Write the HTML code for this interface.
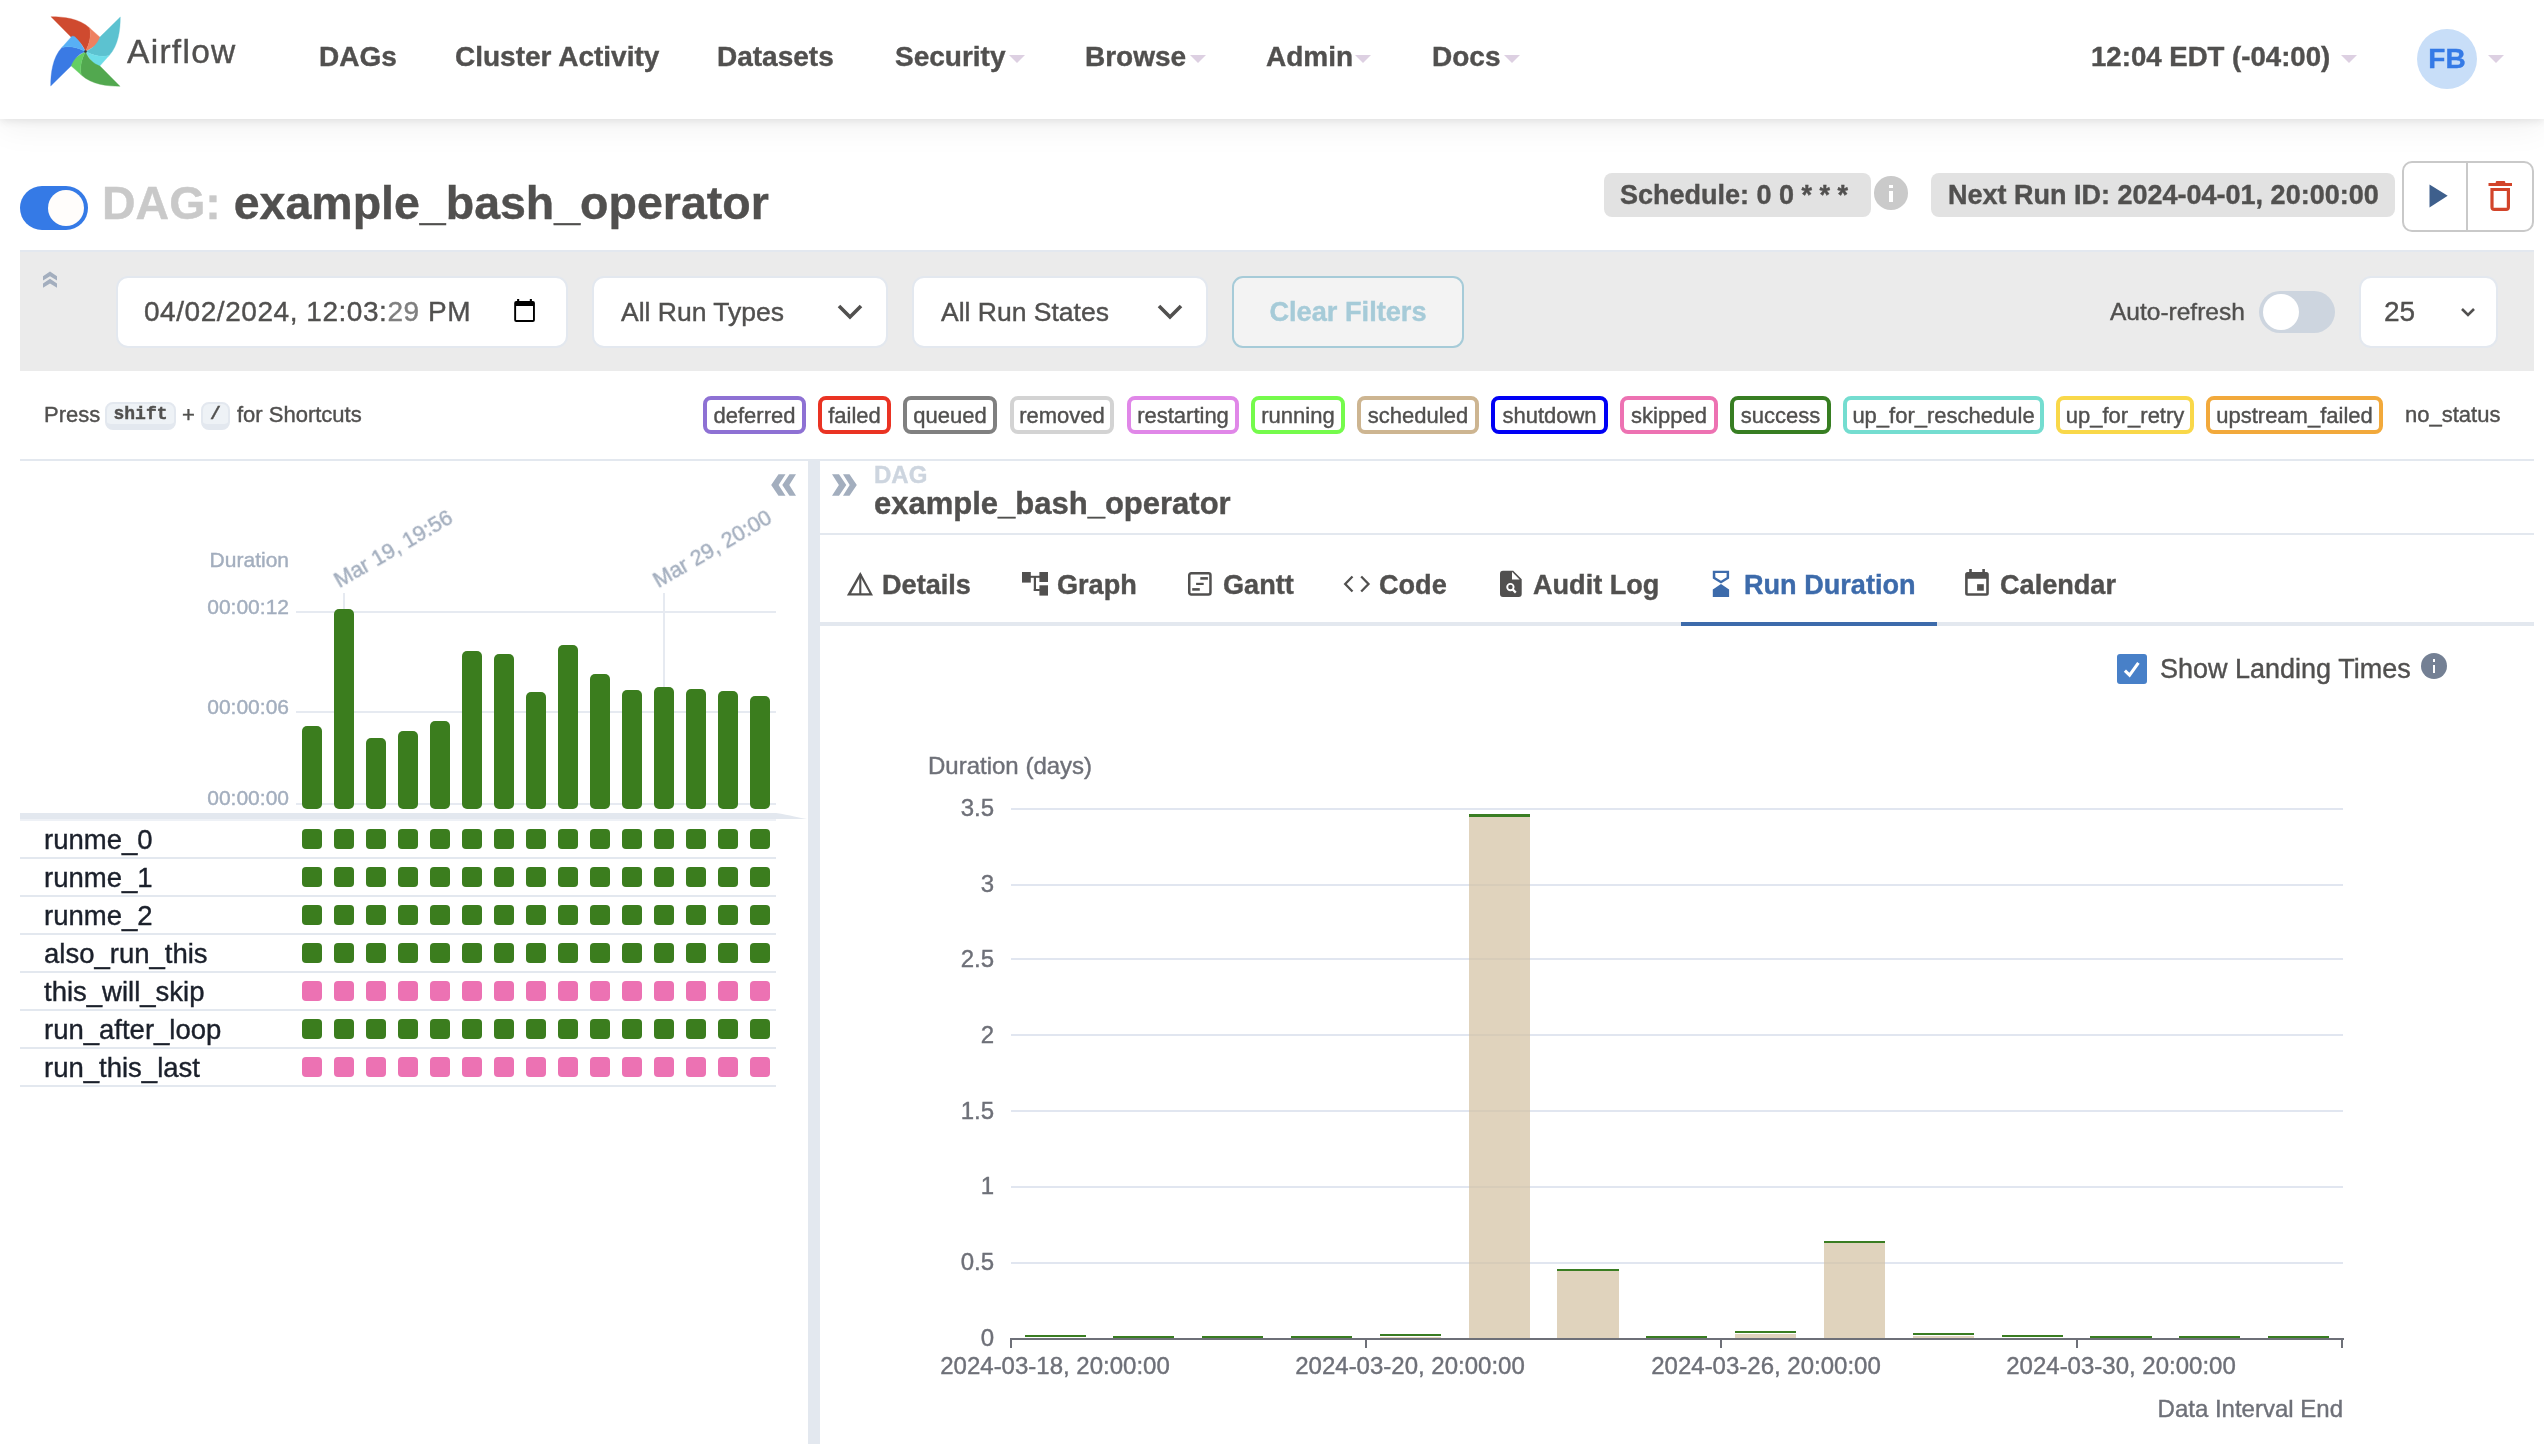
<!DOCTYPE html>
<html><head><meta charset="utf-8">
<style>
html,body{margin:0;padding:0;background:#fff;width:2544px;height:1444px;overflow:hidden;position:relative;font-family:"Liberation Sans",sans-serif;color:#51504f}
.a{position:absolute}
.t{position:absolute;white-space:nowrap;line-height:1;will-change:transform;-webkit-text-stroke:0.4px currentColor}
.b{font-weight:bold}
.caret{position:absolute;width:0;height:0;border-left:8px solid transparent;border-right:8px solid transparent;border-top:8px solid #ddd0e2}
.badge{will-change:transform;-webkit-text-stroke:0.4px currentColor;position:absolute;top:396px;height:38px;box-sizing:border-box;border:4px solid;border-radius:8px;font-size:22px;line-height:31.5px;text-align:center;color:#51504f}
.sq{position:absolute;width:20px;height:20px;border-radius:4px}
.gl{position:absolute;height:2px;background:#e3e8ef}
</style></head><body>

<!-- NAVBAR -->
<div class="a" style="left:0;top:0;width:2544px;height:119px;background:#fff;box-shadow:0 2px 8px rgba(0,0,0,0.09),0 8px 32px rgba(0,0,0,0.06);z-index:2"></div>
<div class="a" style="left:0;top:0;width:2544px;height:119px;z-index:3">
  <svg class="a" style="left:0;top:0" width="140" height="119" viewBox="0 0 140 119">
    <g transform="translate(85.5 51.5)">
      <g id="blade">
        <path d="M-34.5,-34.8 C-22,-34.8 -6,-33 4.1,-23.6 C6,-16 4,-8 0,0 C-3,-8 -8,-12 -14.7,-14.7 Z" fill="#cf4a2f" stroke="#cf4a2f" stroke-width="0.35"/>
        <path d="M4.1,-23.6 L15.3,-13.6 C15.5,-12 15,-11 14.7,-10.6 C11,-6 5,-3 0,0 C4,-8 6,-16 4.1,-23.6 Z" fill="#ee8060" stroke="#ee8060" stroke-width="0.35"/>
      </g>
      <g transform="rotate(90)">
        <path d="M-34.5,-34.8 C-22,-34.8 -6,-33 4.1,-23.6 C6,-16 4,-8 0,0 C-3,-8 -8,-12 -14.7,-14.7 Z" fill="#5cc2d0" stroke="#5cc2d0" stroke-width="0.35"/>
        <path d="M4.1,-23.6 L15.3,-13.6 C15.5,-12 15,-11 14.7,-10.6 C11,-6 5,-3 0,0 C4,-8 6,-16 4.1,-23.6 Z" fill="#6ddde8" stroke="#6ddde8" stroke-width="0.35"/>
      </g>
      <g transform="rotate(180)">
        <path d="M-34.5,-34.8 C-22,-34.8 -6,-33 4.1,-23.6 C6,-16 4,-8 0,0 C-3,-8 -8,-12 -14.7,-14.7 Z" fill="#52a84f" stroke="#52a84f" stroke-width="0.35"/>
        <path d="M4.1,-23.6 L15.3,-13.6 C15.5,-12 15,-11 14.7,-10.6 C11,-6 5,-3 0,0 C4,-8 6,-16 4.1,-23.6 Z" fill="#65cf63" stroke="#65cf63" stroke-width="0.35"/>
      </g>
      <g transform="rotate(270)">
        <path d="M-34.5,-34.8 C-22,-34.8 -6,-33 4.1,-23.6 C6,-16 4,-8 0,0 C-3,-8 -8,-12 -14.7,-14.7 Z" fill="#3a7ae4" stroke="#3a7ae4" stroke-width="0.35"/>
        <path d="M4.1,-23.6 L15.3,-13.6 C15.5,-12 15,-11 14.7,-10.6 C11,-6 5,-3 0,0 C4,-8 6,-16 4.1,-23.6 Z" fill="#58b0f5" stroke="#58b0f5" stroke-width="0.35"/>
      </g>
      <circle r="1.3" fill="#333"/>
    </g>
  </svg>
  <div class="t" style="left:127px;top:35.4px;font-size:33.5px;letter-spacing:1.3px">Airflow</div>
  <div class="t b" style="left:319px;top:43px;font-size:28px">DAGs</div>
  <div class="t b" style="left:455px;top:43px;font-size:28px">Cluster Activity</div>
  <div class="t b" style="left:717px;top:43px;font-size:28px">Datasets</div>
  <div class="t b" style="left:895px;top:43px;font-size:28px">Security</div>
  <div class="caret" style="left:1009px;top:55px"></div>
  <div class="t b" style="left:1085px;top:43px;font-size:28px">Browse</div>
  <div class="caret" style="left:1190px;top:55px"></div>
  <div class="t b" style="left:1266px;top:43px;font-size:28px">Admin</div>
  <div class="caret" style="left:1355px;top:55px"></div>
  <div class="t b" style="left:1432px;top:43px;font-size:28px">Docs</div>
  <div class="caret" style="left:1504px;top:55px"></div>
  <div class="t b" style="left:2090.5px;top:43px;font-size:27.6px">12:04 EDT (-04:00)</div>
  <div class="caret" style="left:2341px;top:55px"></div>
  <div class="a" style="left:2417px;top:29px;width:60px;height:60px;border-radius:50%;background:#c8def8"></div>
  <div class="t b" style="left:2417px;top:45.2px;width:60px;text-align:center;font-size:28px;color:#357ae6">FB</div>
  <div class="caret" style="left:2488px;top:55px"></div>
</div>

<!-- TITLE ROW -->
<div class="a" style="left:20px;top:186px;width:68px;height:44px;border-radius:22px;background:#357ae6"></div>
<div class="a" style="left:48px;top:190px;width:36px;height:36px;border-radius:50%;background:#fffdfb"></div>
<div class="t b" style="left:101.5px;top:179.8px;font-size:46.5px;color:#c9c9c9">DAG: <span style="color:#51504f">example_bash_operator</span></div>

<div class="a" style="left:1604px;top:173px;width:267px;height:44px;border-radius:8px;background:#e2e2e2"></div>
<div class="t b" style="left:1620px;top:182px;font-size:27px">Schedule: 0 0 * * *</div>
<div class="a" style="left:1874px;top:176.2px;width:33.6px;height:33.6px;border-radius:50%;background:#cacaca"></div>
<div class="a" style="left:1889px;top:184.8px;width:4px;height:3.2px;background:#fff"></div>
<div class="a" style="left:1889px;top:190.9px;width:4px;height:10.7px;background:#fff"></div>
<div class="a" style="left:1931px;top:173px;width:464px;height:44px;border-radius:8px;background:#e2e2e2"></div>
<div class="t b" style="left:1948px;top:182px;font-size:27px">Next Run ID: 2024-04-01, 20:00:00</div>
<div class="a" style="left:2402px;top:161px;width:132px;height:71px;box-sizing:border-box;border:2px solid #c9c9c9;border-radius:10px"></div>
<div class="a" style="left:2466px;top:162px;width:2px;height:69px;background:#c9c9c9"></div>
<svg class="a" style="left:2420px;top:176px" width="40" height="40" viewBox="0 0 40 40"><path d="M9.5,8.5 L27.7,19.8 L9.5,31.5 Z" fill="#3e5f8c"/></svg>
<svg class="a" style="left:2480px;top:176px" width="40" height="40" viewBox="0 0 40 40">
  <path d="M8.5,7.1 H32 V10 H8.5 Z M17,4.9 H24 a1.3,1.3 0 0 1 1.3,1.3 V7.3 H15.7 V6.2 a1.3,1.3 0 0 1 1.3,-1.3 Z" fill="#d2442a"/>
  <path d="M10.4,11.9 H30 V31 a3.9,3.9 0 0 1 -3.9,3.9 H14.3 a3.9,3.9 0 0 1 -3.9,-3.9 Z M13.6,14.9 V31.7 H26.8 V14.9 Z" fill="#d2442a" fill-rule="evenodd"/>
</svg>

<!-- FILTER BAR -->
<div class="a" style="left:20px;top:250px;width:2514px;height:121px;background:#ebebeb;border-top:2px solid #e3e8ef;box-sizing:border-box"></div>
<svg class="a" style="left:40px;top:268px" width="20" height="24" viewBox="0 0 20 24"><path d="M3,8.3 L10,3.6 L17,8.3 L17,12.5 L10,8.3 L3,12.5 Z M3,15.5 L10,10.8 L17,15.5 L17,19.7 L10,15.5 L3,19.7 Z" fill="#a3aebe"/></svg>

<div class="a" style="left:116px;top:276px;width:452px;height:72px;box-sizing:border-box;border:2px solid #e3e8ef;border-radius:12px;background:#fff"></div>
<div class="t" style="left:144px;top:297.6px;font-size:28px;letter-spacing:0.55px">04/02/2024, 12:03:<span style="color:#7f7f7f">29</span> PM</div>
<svg class="a" style="left:512px;top:298px" width="26" height="26" viewBox="0 0 26 26"><path d="M4.2,2.9 H20.9 a2,2 0 0 1 2,2 V22 a2,2 0 0 1 -2,2 H4.2 a2,2 0 0 1 -2,-2 V4.9 a2,2 0 0 1 2,-2 Z M4.1,7.9 V22.1 H21 V7.9 Z" fill="#000" fill-rule="evenodd"/><rect x="5.1" y="1" width="2.1" height="3" fill="#000"/><rect x="17.8" y="1" width="2.1" height="3" fill="#000"/></svg>

<div class="a" style="left:592px;top:276px;width:296px;height:72px;box-sizing:border-box;border:2px solid #e3e8ef;border-radius:12px;background:#fff"></div>
<div class="t" style="left:621px;top:299.2px;font-size:26.5px">All Run Types</div>
<svg class="a" style="left:836px;top:299.3px" width="28" height="24" viewBox="0 0 28 24"><path d="M3,7 L14,18 L25,7" fill="none" stroke="#51504f" stroke-width="3.6"/></svg>

<div class="a" style="left:912px;top:276px;width:296px;height:72px;box-sizing:border-box;border:2px solid #e3e8ef;border-radius:12px;background:#fff"></div>
<div class="t" style="left:941px;top:299.2px;font-size:26.5px">All Run States</div>
<svg class="a" style="left:1156px;top:299.3px" width="28" height="24" viewBox="0 0 28 24"><path d="M3,7 L14,18 L25,7" fill="none" stroke="#51504f" stroke-width="3.6"/></svg>

<div class="a" style="left:1232px;top:276px;width:232px;height:72px;box-sizing:border-box;border:2px solid #a6cbd8;border-radius:11px;background:#f3f3f3"></div>
<div class="t b" style="left:1232px;top:297.6px;width:232px;text-align:center;font-size:27.2px;color:#a6cbd8">Clear Filters</div>

<div class="t" style="left:2109.5px;top:299.8px;font-size:24.5px">Auto-refresh</div>
<div class="a" style="left:2259px;top:291px;width:76px;height:42px;border-radius:21px;background:#cdd5df"></div>
<div class="a" style="left:2262.5px;top:293.8px;width:36.2px;height:36.2px;border-radius:50%;background:#fff"></div>
<div class="a" style="left:2359px;top:276px;width:139px;height:72px;box-sizing:border-box;border:2px solid #e3e8ef;border-radius:12px;background:#fff"></div>
<div class="t" style="left:2384px;top:297.6px;font-size:28px">25</div>
<svg class="a" style="left:2458px;top:302px" width="20" height="20" viewBox="0 0 20 20"><path d="M4,7 L10,13 L16,7" fill="none" stroke="#51504f" stroke-width="2.6"/></svg>

<!-- LEGEND ROW -->
<div class="t" style="left:44px;top:404px;font-size:22px">Press</div>
<div class="a" style="left:105px;top:402px;width:71px;height:28px;box-sizing:border-box;background:#eef2f6;border:2px solid #e3e8ef;border-bottom:6px solid #e3e8ef;border-radius:8px"></div>
<div class="t b" style="left:105px;top:405px;width:71px;text-align:center;font-family:'Liberation Mono',monospace;font-size:18px">shift</div>
<div class="t" style="left:182px;top:404px;font-size:22px">+</div>
<div class="a" style="left:201px;top:402px;width:29px;height:28px;box-sizing:border-box;background:#eef2f6;border:2px solid #e3e8ef;border-bottom:6px solid #e3e8ef;border-radius:8px"></div>
<div class="t b" style="left:201px;top:405px;width:29px;text-align:center;font-family:'Liberation Mono',monospace;font-size:18px">/</div>
<div class="t" style="left:237px;top:404px;font-size:22px">for Shortcuts</div>

<div class="badge" style="left:703px;width:103px;border-color:#8e71d4">deferred</div>
<div class="badge" style="left:818px;width:73px;border-color:#ea3323">failed</div>
<div class="badge" style="left:903px;width:94px;border-color:#808080">queued</div>
<div class="badge" style="left:1010px;width:104px;border-color:#d3d3d3">removed</div>
<div class="badge" style="left:1127px;width:112px;border-color:#e087e8">restarting</div>
<div class="badge" style="left:1251px;width:94px;border-color:#75fb4c">running</div>
<div class="badge" style="left:1357px;width:122px;border-color:#cdb591">scheduled</div>
<div class="badge" style="left:1491px;width:117px;border-color:#0000f5">shutdown</div>
<div class="badge" style="left:1620px;width:98px;border-color:#ed72b2">skipped</div>
<div class="badge" style="left:1730px;width:101px;border-color:#377e22">success</div>
<div class="badge" style="left:1843px;width:201px;border-color:#74ddd0">up_for_reschedule</div>
<div class="badge" style="left:2056px;width:138px;border-color:#f9d849">up_for_retry</div>
<div class="badge" style="left:2206px;width:177px;border-color:#f2a93b">upstream_failed</div>
<div class="t" style="left:2405px;top:404px;font-size:22px">no_status</div>

<!-- PANELS -->
<div class="a" style="left:20px;top:459px;width:2514px;height:2px;background:#e3e8ef"></div>
<div class="a" style="left:808px;top:461px;width:12px;height:983px;background:#e3e8ef"></div>

<!-- LEFT PANEL -->
<svg class="a" style="left:766px;top:470px" width="36" height="30" viewBox="0 0 36 30"><path d="M12.5,4.2 H19.5 L12.6,15 L19.5,25.7 H12.5 L5.2,15 Z M23.5,4.2 H30 L23.3,15 L30,25.7 H23.5 L16.3,15 Z" fill="#a3aebe"/></svg>
<div class="t" style="left:120px;top:548.5px;width:169px;text-align:right;font-size:21px;color:#a3aebe">Duration</div>
<div class="t" style="left:120px;top:595.7px;width:169px;text-align:right;font-size:21px;color:#a3aebe">00:00:12</div>
<div class="t" style="left:120px;top:695.8px;width:169px;text-align:right;font-size:21px;color:#a3aebe">00:00:06</div>
<div class="t" style="left:120px;top:787.2px;width:169px;text-align:right;font-size:21px;color:#a3aebe">00:00:00</div>
<div class="a" style="left:296px;top:611px;width:480px;height:2px;background:#e6eaf1"></div>
<div class="a" style="left:296px;top:711px;width:480px;height:2px;background:#e6eaf1"></div>
<div class="a" style="left:296px;top:803px;width:480px;height:2px;background:#e6eaf1"></div>
<div class="a" style="left:343px;top:593px;width:2px;height:20px;background:#e6eaf1"></div>
<div class="a" style="left:663px;top:593px;width:2px;height:100px;background:#e6eaf1"></div>
<div class="t" style="left:339.5px;top:571.10px;font-size:21.5px;color:#a3aebe;transform-origin:0 18.20px;transform:rotate(-30deg)">Mar 19, 19:56</div>
<div class="t" style="left:659.0px;top:571.10px;font-size:21.5px;color:#a3aebe;transform-origin:0 18.20px;transform:rotate(-30deg)">Mar 29, 20:00</div>
<div class="a" style="left:302px;top:726.0px;width:20px;height:83.0px;border-radius:5px;background:#3b7d1e"></div>
<div class="a" style="left:334px;top:608.9px;width:20px;height:200.1px;border-radius:5px;background:#3b7d1e"></div>
<div class="a" style="left:366px;top:737.9px;width:20px;height:71.1px;border-radius:5px;background:#3b7d1e"></div>
<div class="a" style="left:398px;top:731.1px;width:20px;height:77.9px;border-radius:5px;background:#3b7d1e"></div>
<div class="a" style="left:430px;top:721.1px;width:20px;height:87.9px;border-radius:5px;background:#3b7d1e"></div>
<div class="a" style="left:462px;top:650.8px;width:20px;height:158.2px;border-radius:5px;background:#3b7d1e"></div>
<div class="a" style="left:494px;top:653.7px;width:20px;height:155.3px;border-radius:5px;background:#3b7d1e"></div>
<div class="a" style="left:526px;top:691.8px;width:20px;height:117.2px;border-radius:5px;background:#3b7d1e"></div>
<div class="a" style="left:558px;top:645.0px;width:20px;height:164.0px;border-radius:5px;background:#3b7d1e"></div>
<div class="a" style="left:590px;top:673.7px;width:20px;height:135.3px;border-radius:5px;background:#3b7d1e"></div>
<div class="a" style="left:622px;top:689.9px;width:20px;height:119.1px;border-radius:5px;background:#3b7d1e"></div>
<div class="a" style="left:654px;top:686.6px;width:20px;height:122.4px;border-radius:5px;background:#3b7d1e"></div>
<div class="a" style="left:686px;top:688.9px;width:20px;height:120.1px;border-radius:5px;background:#3b7d1e"></div>
<div class="a" style="left:718px;top:690.8px;width:20px;height:118.2px;border-radius:5px;background:#3b7d1e"></div>
<div class="a" style="left:750px;top:695.7px;width:20px;height:113.3px;border-radius:5px;background:#3b7d1e"></div>
<svg class="a" style="left:20px;top:812px" width="790" height="12" viewBox="0 0 790 12"><path d="M0,1 H756 C770,3 780,6 787,7 H0 Z" fill="#e3e8ef"/><rect x="0" y="7" width="756" height="2" fill="#eef1f6"/></svg>
<div class="t" style="left:44px;top:825.7px;font-size:27.5px;color:#1b202b">runme_0</div>
<div class="sq" style="left:302px;top:829.3px;background:#3b7d1e"></div>
<div class="sq" style="left:334px;top:829.3px;background:#3b7d1e"></div>
<div class="sq" style="left:366px;top:829.3px;background:#3b7d1e"></div>
<div class="sq" style="left:398px;top:829.3px;background:#3b7d1e"></div>
<div class="sq" style="left:430px;top:829.3px;background:#3b7d1e"></div>
<div class="sq" style="left:462px;top:829.3px;background:#3b7d1e"></div>
<div class="sq" style="left:494px;top:829.3px;background:#3b7d1e"></div>
<div class="sq" style="left:526px;top:829.3px;background:#3b7d1e"></div>
<div class="sq" style="left:558px;top:829.3px;background:#3b7d1e"></div>
<div class="sq" style="left:590px;top:829.3px;background:#3b7d1e"></div>
<div class="sq" style="left:622px;top:829.3px;background:#3b7d1e"></div>
<div class="sq" style="left:654px;top:829.3px;background:#3b7d1e"></div>
<div class="sq" style="left:686px;top:829.3px;background:#3b7d1e"></div>
<div class="sq" style="left:718px;top:829.3px;background:#3b7d1e"></div>
<div class="sq" style="left:750px;top:829.3px;background:#3b7d1e"></div>
<div class="gl" style="left:20px;top:857px;width:756px"></div>
<div class="t" style="left:44px;top:863.7px;font-size:27.5px;color:#1b202b">runme_1</div>
<div class="sq" style="left:302px;top:867.3px;background:#3b7d1e"></div>
<div class="sq" style="left:334px;top:867.3px;background:#3b7d1e"></div>
<div class="sq" style="left:366px;top:867.3px;background:#3b7d1e"></div>
<div class="sq" style="left:398px;top:867.3px;background:#3b7d1e"></div>
<div class="sq" style="left:430px;top:867.3px;background:#3b7d1e"></div>
<div class="sq" style="left:462px;top:867.3px;background:#3b7d1e"></div>
<div class="sq" style="left:494px;top:867.3px;background:#3b7d1e"></div>
<div class="sq" style="left:526px;top:867.3px;background:#3b7d1e"></div>
<div class="sq" style="left:558px;top:867.3px;background:#3b7d1e"></div>
<div class="sq" style="left:590px;top:867.3px;background:#3b7d1e"></div>
<div class="sq" style="left:622px;top:867.3px;background:#3b7d1e"></div>
<div class="sq" style="left:654px;top:867.3px;background:#3b7d1e"></div>
<div class="sq" style="left:686px;top:867.3px;background:#3b7d1e"></div>
<div class="sq" style="left:718px;top:867.3px;background:#3b7d1e"></div>
<div class="sq" style="left:750px;top:867.3px;background:#3b7d1e"></div>
<div class="gl" style="left:20px;top:895px;width:756px"></div>
<div class="t" style="left:44px;top:901.7px;font-size:27.5px;color:#1b202b">runme_2</div>
<div class="sq" style="left:302px;top:905.3px;background:#3b7d1e"></div>
<div class="sq" style="left:334px;top:905.3px;background:#3b7d1e"></div>
<div class="sq" style="left:366px;top:905.3px;background:#3b7d1e"></div>
<div class="sq" style="left:398px;top:905.3px;background:#3b7d1e"></div>
<div class="sq" style="left:430px;top:905.3px;background:#3b7d1e"></div>
<div class="sq" style="left:462px;top:905.3px;background:#3b7d1e"></div>
<div class="sq" style="left:494px;top:905.3px;background:#3b7d1e"></div>
<div class="sq" style="left:526px;top:905.3px;background:#3b7d1e"></div>
<div class="sq" style="left:558px;top:905.3px;background:#3b7d1e"></div>
<div class="sq" style="left:590px;top:905.3px;background:#3b7d1e"></div>
<div class="sq" style="left:622px;top:905.3px;background:#3b7d1e"></div>
<div class="sq" style="left:654px;top:905.3px;background:#3b7d1e"></div>
<div class="sq" style="left:686px;top:905.3px;background:#3b7d1e"></div>
<div class="sq" style="left:718px;top:905.3px;background:#3b7d1e"></div>
<div class="sq" style="left:750px;top:905.3px;background:#3b7d1e"></div>
<div class="gl" style="left:20px;top:933px;width:756px"></div>
<div class="t" style="left:44px;top:939.7px;font-size:27.5px;color:#1b202b">also_run_this</div>
<div class="sq" style="left:302px;top:943.3px;background:#3b7d1e"></div>
<div class="sq" style="left:334px;top:943.3px;background:#3b7d1e"></div>
<div class="sq" style="left:366px;top:943.3px;background:#3b7d1e"></div>
<div class="sq" style="left:398px;top:943.3px;background:#3b7d1e"></div>
<div class="sq" style="left:430px;top:943.3px;background:#3b7d1e"></div>
<div class="sq" style="left:462px;top:943.3px;background:#3b7d1e"></div>
<div class="sq" style="left:494px;top:943.3px;background:#3b7d1e"></div>
<div class="sq" style="left:526px;top:943.3px;background:#3b7d1e"></div>
<div class="sq" style="left:558px;top:943.3px;background:#3b7d1e"></div>
<div class="sq" style="left:590px;top:943.3px;background:#3b7d1e"></div>
<div class="sq" style="left:622px;top:943.3px;background:#3b7d1e"></div>
<div class="sq" style="left:654px;top:943.3px;background:#3b7d1e"></div>
<div class="sq" style="left:686px;top:943.3px;background:#3b7d1e"></div>
<div class="sq" style="left:718px;top:943.3px;background:#3b7d1e"></div>
<div class="sq" style="left:750px;top:943.3px;background:#3b7d1e"></div>
<div class="gl" style="left:20px;top:971px;width:756px"></div>
<div class="t" style="left:44px;top:977.7px;font-size:27.5px;color:#1b202b">this_will_skip</div>
<div class="sq" style="left:302px;top:981.3px;background:#ec72b3"></div>
<div class="sq" style="left:334px;top:981.3px;background:#ec72b3"></div>
<div class="sq" style="left:366px;top:981.3px;background:#ec72b3"></div>
<div class="sq" style="left:398px;top:981.3px;background:#ec72b3"></div>
<div class="sq" style="left:430px;top:981.3px;background:#ec72b3"></div>
<div class="sq" style="left:462px;top:981.3px;background:#ec72b3"></div>
<div class="sq" style="left:494px;top:981.3px;background:#ec72b3"></div>
<div class="sq" style="left:526px;top:981.3px;background:#ec72b3"></div>
<div class="sq" style="left:558px;top:981.3px;background:#ec72b3"></div>
<div class="sq" style="left:590px;top:981.3px;background:#ec72b3"></div>
<div class="sq" style="left:622px;top:981.3px;background:#ec72b3"></div>
<div class="sq" style="left:654px;top:981.3px;background:#ec72b3"></div>
<div class="sq" style="left:686px;top:981.3px;background:#ec72b3"></div>
<div class="sq" style="left:718px;top:981.3px;background:#ec72b3"></div>
<div class="sq" style="left:750px;top:981.3px;background:#ec72b3"></div>
<div class="gl" style="left:20px;top:1009px;width:756px"></div>
<div class="t" style="left:44px;top:1015.7px;font-size:27.5px;color:#1b202b">run_after_loop</div>
<div class="sq" style="left:302px;top:1019.3px;background:#3b7d1e"></div>
<div class="sq" style="left:334px;top:1019.3px;background:#3b7d1e"></div>
<div class="sq" style="left:366px;top:1019.3px;background:#3b7d1e"></div>
<div class="sq" style="left:398px;top:1019.3px;background:#3b7d1e"></div>
<div class="sq" style="left:430px;top:1019.3px;background:#3b7d1e"></div>
<div class="sq" style="left:462px;top:1019.3px;background:#3b7d1e"></div>
<div class="sq" style="left:494px;top:1019.3px;background:#3b7d1e"></div>
<div class="sq" style="left:526px;top:1019.3px;background:#3b7d1e"></div>
<div class="sq" style="left:558px;top:1019.3px;background:#3b7d1e"></div>
<div class="sq" style="left:590px;top:1019.3px;background:#3b7d1e"></div>
<div class="sq" style="left:622px;top:1019.3px;background:#3b7d1e"></div>
<div class="sq" style="left:654px;top:1019.3px;background:#3b7d1e"></div>
<div class="sq" style="left:686px;top:1019.3px;background:#3b7d1e"></div>
<div class="sq" style="left:718px;top:1019.3px;background:#3b7d1e"></div>
<div class="sq" style="left:750px;top:1019.3px;background:#3b7d1e"></div>
<div class="gl" style="left:20px;top:1047px;width:756px"></div>
<div class="t" style="left:44px;top:1053.7px;font-size:27.5px;color:#1b202b">run_this_last</div>
<div class="sq" style="left:302px;top:1057.3px;background:#ec72b3"></div>
<div class="sq" style="left:334px;top:1057.3px;background:#ec72b3"></div>
<div class="sq" style="left:366px;top:1057.3px;background:#ec72b3"></div>
<div class="sq" style="left:398px;top:1057.3px;background:#ec72b3"></div>
<div class="sq" style="left:430px;top:1057.3px;background:#ec72b3"></div>
<div class="sq" style="left:462px;top:1057.3px;background:#ec72b3"></div>
<div class="sq" style="left:494px;top:1057.3px;background:#ec72b3"></div>
<div class="sq" style="left:526px;top:1057.3px;background:#ec72b3"></div>
<div class="sq" style="left:558px;top:1057.3px;background:#ec72b3"></div>
<div class="sq" style="left:590px;top:1057.3px;background:#ec72b3"></div>
<div class="sq" style="left:622px;top:1057.3px;background:#ec72b3"></div>
<div class="sq" style="left:654px;top:1057.3px;background:#ec72b3"></div>
<div class="sq" style="left:686px;top:1057.3px;background:#ec72b3"></div>
<div class="sq" style="left:718px;top:1057.3px;background:#ec72b3"></div>
<div class="sq" style="left:750px;top:1057.3px;background:#ec72b3"></div>
<div class="gl" style="left:20px;top:1085px;width:756px"></div>

<!-- RIGHT PANEL -->
<svg class="a" style="left:826px;top:470px" width="36" height="30" viewBox="0 0 36 30"><path d="M6,4.2 H13 L20.3,15 L13,25.7 H6 L12.9,15 Z M17,4.2 H23.5 L30.8,15 L23.5,25.7 H17 L23.7,15 Z" fill="#a3aebe"/></svg>
<div class="t" style="left:874px;top:463.18px;font-size:24px;font-weight:bold;color:#cdd5df">DAG</div>
<div class="t" style="left:874.0px;top:487.8px;font-size:31px;font-weight:bold">example_bash_operator</div>
<div class="a" style="left:820px;top:533px;width:1714px;height:2px;background:#e3e8ef"></div>
<div class="t" style="left:882.4px;top:571.1px;font-size:27.1px;font-weight:bold;">Details</div>
<div class="t" style="left:1057.0px;top:571.1px;font-size:27.1px;font-weight:bold;">Graph</div>
<div class="t" style="left:1222.7px;top:571.1px;font-size:27.1px;font-weight:bold;">Gantt</div>
<div class="t" style="left:1379.0px;top:571.1px;font-size:27.1px;font-weight:bold;">Code</div>
<div class="t" style="left:1533.0px;top:571.1px;font-size:27.1px;font-weight:bold;">Audit Log</div>
<div class="t" style="left:1744.2px;top:571.1px;font-size:27.1px;font-weight:bold;color:#3d6bab;">Run Duration</div>
<div class="t" style="left:1999.6px;top:571.1px;font-size:27.1px;font-weight:bold;">Calendar</div>
<div class="a" style="left:820px;top:622px;width:1714px;height:4px;background:#e3e8ef"></div>
<div class="a" style="left:1681px;top:622px;width:256px;height:4px;background:#3d6bab"></div>
<svg class="a" style="left:846px;top:571px" width="28" height="26" viewBox="0 0 28 26"><path d="M14.3,1.1 L27,24.6 H0.9 Z M14.3,5.8 L5.16,22.3 H23.44 Z" fill="#51504f" fill-rule="evenodd"/><rect x="13.25" y="3" width="2.1" height="20" fill="#51504f"/></svg>
<svg class="a" style="left:1021px;top:571px" width="28" height="26" viewBox="0 0 28 26"><rect x="1" y="1" width="8.8" height="10.6" fill="#51504f"/><rect x="18.4" y="1" width="8.6" height="10" fill="#51504f"/><rect x="18.4" y="14.3" width="8.6" height="10.3" fill="#51504f"/><rect x="9" y="4.8" width="10" height="2" fill="#51504f"/><rect x="12.8" y="5" width="2.2" height="15" fill="#51504f"/><rect x="12.8" y="18" width="6" height="2" fill="#51504f"/></svg>
<svg class="a" style="left:1187px;top:571px" width="26" height="26" viewBox="0 0 26 26"><rect x="2.25" y="2.25" width="21.2" height="21.3" rx="2" fill="none" stroke="#51504f" stroke-width="2.5"/><rect x="13.3" y="6.1" width="7.6" height="2.6" fill="#51504f"/><rect x="9.1" y="11.8" width="7.6" height="2.2" fill="#51504f"/><rect x="5.2" y="17.1" width="7.6" height="2.6" fill="#51504f"/></svg>
<svg class="a" style="left:1342px;top:574px" width="30" height="20" viewBox="0 0 30 20"><path d="M10.5,2.5 L3.2,10 L10.5,17.5 M19.2,2.5 L26.5,10 L19.2,17.5" fill="none" stroke="#51504f" stroke-width="2.3"/></svg>
<svg class="a" style="left:1499px;top:570px" width="24" height="28" viewBox="0 0 24 28"><path d="M4,0.7 H14.2 L22.7,9.2 V24 a3,3 0 0 1 -3,3 H4 a3,3 0 0 1 -3,-3 V3.7 a3,3 0 0 1 3,-3 Z" fill="#51504f"/><path d="M13,1.8 V9.4 H20.6 Z" fill="#fff"/><circle cx="11.4" cy="17.1" r="3.2" fill="none" stroke="#fff" stroke-width="1.9"/><path d="M13.6,19.4 L16.8,22.6" stroke="#fff" stroke-width="2.2"/></svg>
<svg class="a" style="left:1712px;top:570px" width="18" height="28" viewBox="0 0 18 28"><path d="M0.8,0.7 H17.1 V8.4 L9,13.6 L0.8,8.4 Z M3.3,3.1 V7.2 L9,10.8 L14.6,7.2 V3.1 Z" fill="#3d6bab" fill-rule="evenodd"/><path d="M9,14 L17.1,19.6 V27 H0.8 V19.6 Z" fill="#3d6bab"/></svg>
<svg class="a" style="left:1964px;top:568px" width="26" height="29" viewBox="0 0 26 29"><path d="M3.6,4 H22.3 a2.5,2.5 0 0 1 2.5,2.5 V25.2 a2.5,2.5 0 0 1 -2.5,2.5 H3.6 a2.5,2.5 0 0 1 -2.5,-2.5 V6.5 a2.5,2.5 0 0 1 2.5,-2.5 Z M3.7,10.7 V25.2 H22.2 V10.7 Z" fill="#51504f" fill-rule="evenodd"/><rect x="5.2" y="1" width="2.6" height="4" fill="#51504f"/><rect x="18.3" y="1" width="2.6" height="4" fill="#51504f"/><rect x="13.1" y="16.2" width="6.7" height="6.5" fill="#51504f"/></svg>
<div class="a" style="left:2117px;top:654px;width:30px;height:30px;border-radius:3px;background:#4880c8"></div>
<svg class="a" style="left:2117px;top:654px" width="30" height="30" viewBox="0 0 30 30"><path d="M7.9,16.6 L12.6,21.2 L21.4,8.9" fill="none" stroke="#fff" stroke-width="3.1"/></svg>
<div class="t" style="left:2159.5px;top:655.9px;font-size:27px;">Show Landing Times</div>
<div class="a" style="left:2421px;top:653px;width:26px;height:26px;border-radius:50%;background:#748094"></div>
<div class="a" style="left:2432.6px;top:659px;width:2.8px;height:3px;background:#fff"></div>
<div class="a" style="left:2432.6px;top:665px;width:2.8px;height:8px;background:#fff"></div>
<div class="t" style="left:928.4px;top:753.5px;font-size:24px;color:#6e7078">Duration (days)</div>
<div class="t" style="left:893.5px;top:796.0px;width:100px;text-align:right;font-size:24px;color:#6e7078">3.5</div>
<div class="a" style="left:1010.6px;top:807.7px;width:1332.4px;height:2px;background:#e1e6f0"></div>
<div class="t" style="left:893.5px;top:871.7px;width:100px;text-align:right;font-size:24px;color:#6e7078">3</div>
<div class="a" style="left:1010.6px;top:883.8px;width:1332.4px;height:2px;background:#e1e6f0"></div>
<div class="t" style="left:893.5px;top:947.3px;width:100px;text-align:right;font-size:24px;color:#6e7078">2.5</div>
<div class="a" style="left:1010.6px;top:958.3px;width:1332.4px;height:2px;background:#e1e6f0"></div>
<div class="t" style="left:893.5px;top:1023.0px;width:100px;text-align:right;font-size:24px;color:#6e7078">2</div>
<div class="a" style="left:1010.6px;top:1033.6px;width:1332.4px;height:2px;background:#e1e6f0"></div>
<div class="t" style="left:893.5px;top:1098.6px;width:100px;text-align:right;font-size:24px;color:#6e7078">1.5</div>
<div class="a" style="left:1010.6px;top:1109.9px;width:1332.4px;height:2px;background:#e1e6f0"></div>
<div class="t" style="left:893.5px;top:1174.3px;width:100px;text-align:right;font-size:24px;color:#6e7078">1</div>
<div class="a" style="left:1010.6px;top:1185.7px;width:1332.4px;height:2px;background:#e1e6f0"></div>
<div class="t" style="left:893.5px;top:1249.9px;width:100px;text-align:right;font-size:24px;color:#6e7078">0.5</div>
<div class="a" style="left:1010.6px;top:1261.6px;width:1332.4px;height:2px;background:#e1e6f0"></div>
<div class="t" style="left:893.5px;top:1325.6px;width:100px;text-align:right;font-size:24px;color:#6e7078">0</div>
<div class="a" style="left:1024.5px;top:1337.55px;width:61.2px;height:0.45px;background:rgba(211,192,161,0.7)"></div>
<div class="a" style="left:1024.5px;top:1335.05px;width:61.2px;height:2.2px;background:#3a7d22"></div>
<div class="a" style="left:1113.3px;top:1336.05px;width:61.2px;height:2.2px;background:#3a7d22"></div>
<div class="a" style="left:1202.1px;top:1336.05px;width:61.2px;height:2.2px;background:#3a7d22"></div>
<div class="a" style="left:1290.9px;top:1336.05px;width:61.2px;height:2.2px;background:#3a7d22"></div>
<div class="a" style="left:1379.8px;top:1336.55px;width:61.2px;height:1.45px;background:rgba(211,192,161,0.7)"></div>
<div class="a" style="left:1379.8px;top:1334.05px;width:61.2px;height:2.2px;background:#3a7d22"></div>
<div class="a" style="left:1468.6px;top:816.95px;width:61.2px;height:521.05px;background:rgba(211,192,161,0.7)"></div>
<div class="a" style="left:1468.6px;top:814.45px;width:61.2px;height:2.2px;background:#3a7d22"></div>
<div class="a" style="left:1557.4px;top:1271.15px;width:61.2px;height:66.85px;background:rgba(211,192,161,0.7)"></div>
<div class="a" style="left:1557.4px;top:1268.65px;width:61.2px;height:2.2px;background:#3a7d22"></div>
<div class="a" style="left:1646.3px;top:1336.45px;width:61.2px;height:2.2px;background:#3a7d22"></div>
<div class="a" style="left:1735.1px;top:1333.65px;width:61.2px;height:4.35px;background:rgba(211,192,161,0.7)"></div>
<div class="a" style="left:1735.1px;top:1331.15px;width:61.2px;height:2.2px;background:#3a7d22"></div>
<div class="a" style="left:1823.9px;top:1243.05px;width:61.2px;height:94.95px;background:rgba(211,192,161,0.7)"></div>
<div class="a" style="left:1823.9px;top:1240.55px;width:61.2px;height:2.2px;background:#3a7d22"></div>
<div class="a" style="left:1912.8px;top:1335.75px;width:61.2px;height:2.25px;background:rgba(211,192,161,0.7)"></div>
<div class="a" style="left:1912.8px;top:1333.25px;width:61.2px;height:2.2px;background:#3a7d22"></div>
<div class="a" style="left:2001.6px;top:1337.55px;width:61.2px;height:0.45px;background:rgba(211,192,161,0.7)"></div>
<div class="a" style="left:2001.6px;top:1335.05px;width:61.2px;height:2.2px;background:#3a7d22"></div>
<div class="a" style="left:2090.4px;top:1338.25px;width:61.2px;height:0px;background:rgba(211,192,161,0.7)"></div>
<div class="a" style="left:2090.4px;top:1335.75px;width:61.2px;height:2.2px;background:#3a7d22"></div>
<div class="a" style="left:2179.2px;top:1338.15px;width:61.2px;height:0px;background:rgba(211,192,161,0.7)"></div>
<div class="a" style="left:2179.2px;top:1335.65px;width:61.2px;height:2.2px;background:#3a7d22"></div>
<div class="a" style="left:2268.1px;top:1338.15px;width:61.2px;height:0px;background:rgba(211,192,161,0.7)"></div>
<div class="a" style="left:2268.1px;top:1335.65px;width:61.2px;height:2.2px;background:#3a7d22"></div>
<div class="a" style="left:1009.6px;top:1337.6px;width:1334.4px;height:2px;background:#6e7078"></div>
<div class="a" style="left:1009.6px;top:1338px;width:2px;height:9.6px;background:#6e7078"></div>
<div class="a" style="left:1364.9px;top:1338px;width:2px;height:9.6px;background:#6e7078"></div>
<div class="a" style="left:1720.2px;top:1338px;width:2px;height:9.6px;background:#6e7078"></div>
<div class="a" style="left:2075.6px;top:1338px;width:2px;height:9.6px;background:#6e7078"></div>
<div class="a" style="left:2341.0px;top:1338px;width:2px;height:9.6px;background:#6e7078"></div>
<div class="t" style="left:905.0px;top:1353.7px;width:300px;text-align:center;font-size:24px;color:#6e7078">2024-03-18, 20:00:00</div>
<div class="t" style="left:1260.3px;top:1353.7px;width:300px;text-align:center;font-size:24px;color:#6e7078">2024-03-20, 20:00:00</div>
<div class="t" style="left:1615.6px;top:1353.7px;width:300px;text-align:center;font-size:24px;color:#6e7078">2024-03-26, 20:00:00</div>
<div class="t" style="left:1971.0px;top:1353.7px;width:300px;text-align:center;font-size:24px;color:#6e7078">2024-03-30, 20:00:00</div>
<div class="t" style="left:2043px;top:1397.2px;width:300px;text-align:right;font-size:24px;color:#6e7078">Data Interval End</div>
</body></html>
